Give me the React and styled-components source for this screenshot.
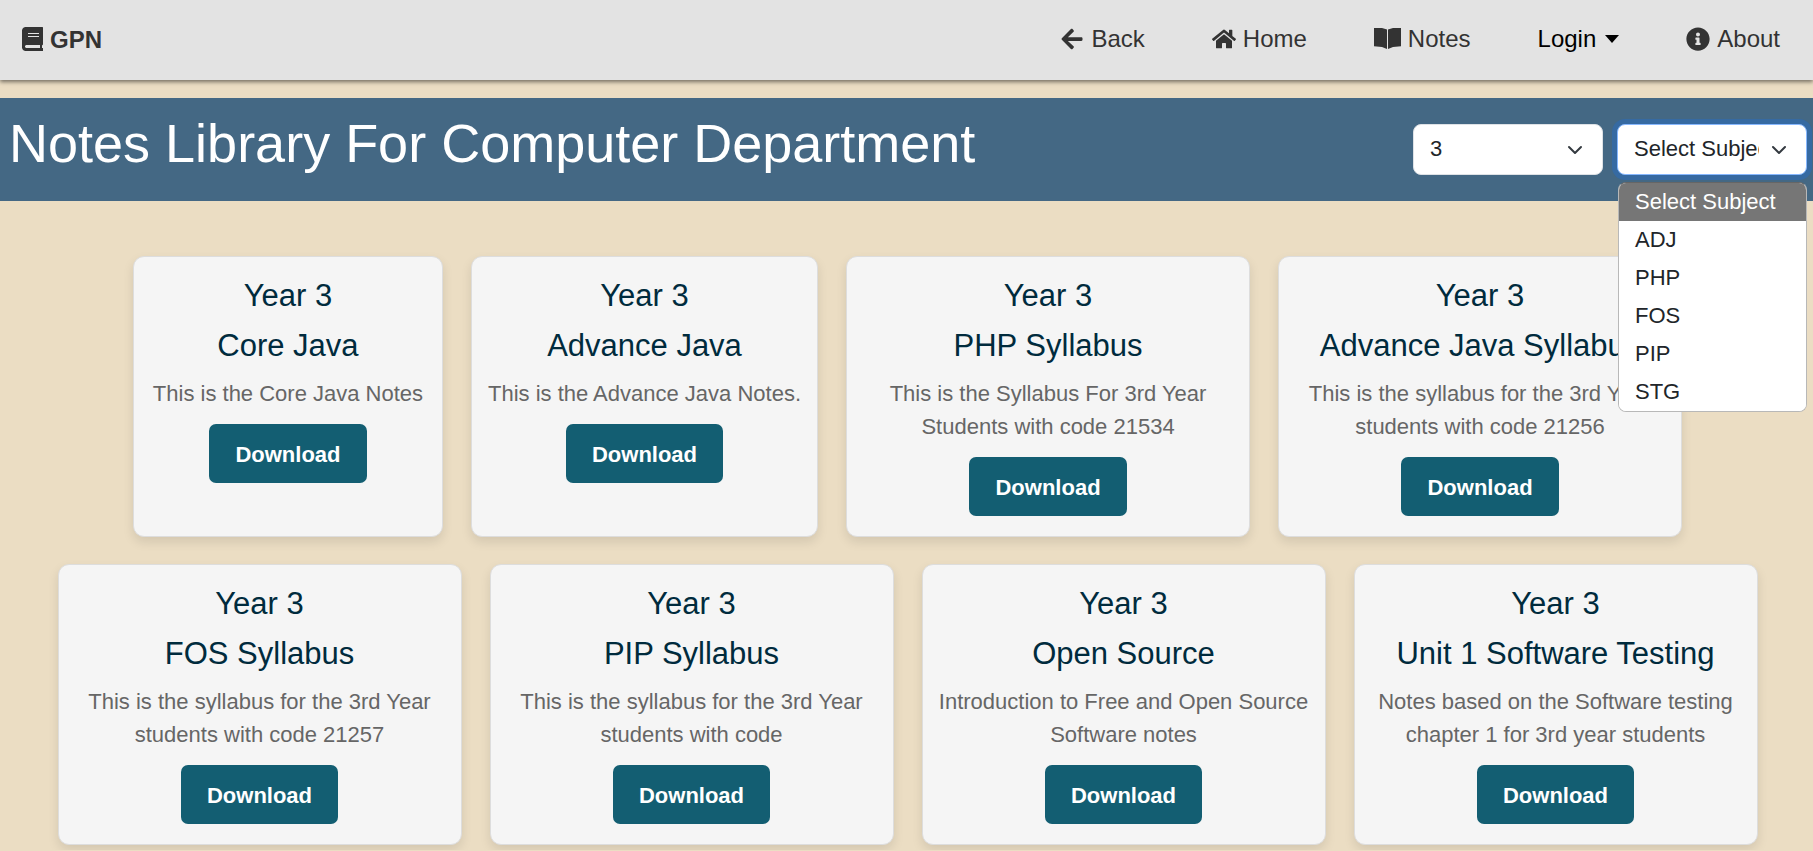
import React, { useState } from "react";
import styled, { createGlobalStyle } from "styled-components";
import { FaArrowLeft, FaHome, FaInfoCircle } from "react-icons/fa";

const GlobalStyle = createGlobalStyle`
  *, *::before, *::after { box-sizing: border-box; }
  body {
    margin: 0;
    background: #ebddc3;
    color: #212529;
    font-family: "Liberation Sans", Arial, sans-serif;
    font-size: 22px;
    line-height: 33px;
  }
`;

const Navbar = styled.header`
  display: flex;
  align-items: center;
  justify-content: space-between;
  height: 80px;
  padding: 0 33px 2px 22px;
  background: #e3e3e3;
  box-shadow: 0 2px 4px rgba(0, 0, 0, 0.5);
  font-size: 24px;
`;

const Brand = styled.a`
  display: flex;
  align-items: center;
  gap: 7px;
  color: #333;
  font-weight: 700;
  text-decoration: none;

  svg {
    width: auto;
    height: 24px;
  }
`;

const NavLinks = styled.nav`
  display: flex;
  align-items: center;
  gap: 67px;
  padding-bottom: 1px;
`;

const NavLink = styled.a`
  display: flex;
  align-items: center;
  gap: 7px;
  color: #333;
  text-decoration: none;

  svg {
    width: auto;
    height: ${(p) => p.$iconHeight || 24}px;
  }
`;

const NavMenuButton = styled.button`
  display: flex;
  align-items: center;
  gap: 9px;
  padding: 0;
  border: 0;
  background: none;
  color: #000;
  font: inherit;

  &::after {
    content: "";
    border: 7px solid transparent;
    border-top: 8px solid #000;
    border-bottom: 0;
  }
`;

const Banner = styled.section`
  display: flex;
  align-items: center;
  justify-content: space-between;
  margin-top: 18px;
  padding: 13px 6px 13px 9px;
  background: #446884;
`;

const Title = styled.h1`
  margin: 0 0 12px;
  color: #fff;
  font-size: 54px;
  font-weight: 400;
  line-height: 65px;
`;

const Filters = styled.div`
  display: flex;
  gap: 14px;
`;

const Field = styled.div`
  position: relative;
  display: grid;
  width: 190px;
`;

const Select = styled.select`
  grid-area: 1 / 1;
  width: 100%;
  height: 51px;
  padding: 0 47px 2px 16px;
  border: 1px solid ${(p) => (p.$open ? "#86b7fe" : "#dee2e6")};
  border-radius: 8px;
  outline: 0;
  box-shadow: ${(p) => (p.$open ? "0 0 0 5px rgba(13, 110, 253, 0.25)" : "none")};
  appearance: none;
  background: #fff;
  color: #212529;
  font: inherit;
  text-overflow: clip;
`;

const Chevron = styled.svg`
  grid-area: 1 / 1;
  place-self: center end;
  width: 16px;
  height: 16px;
  margin-right: 20px;
  pointer-events: none;
`;

const Options = styled.ul`
  position: absolute;
  top: 58px;
  left: 1px;
  right: 0;
  z-index: 2;
  margin: 0;
  padding: 0;
  overflow: hidden;
  border: 1px solid #b8b8b8;
  border-top-color: #666;
  border-radius: 8px;
  background: #fff;
  list-style: none;
`;

const Option = styled.li`
  height: 38px;
  padding: 0 16px;
  background: ${(p) => (p.$active ? "#767676" : "#fff")};
  color: ${(p) => (p.$active ? "#fff" : "#212529")};
  line-height: 38px;
`;

const CardList = styled.main`
  display: flex;
  flex-wrap: wrap;
  justify-content: center;
  gap: 27px 28px;
  padding: 55px 26px 5px 28px;
`;

const Card = styled.article`
  min-width: 310px;
  max-width: 404px;
  padding: 19px 16px 20px;
  border: 1px solid #ddd;
  border-radius: 11px;
  background: #f5f5f5;
  box-shadow: 0 5px 11px rgba(0, 0, 0, 0.1);
  text-align: center;
`;

const CardHeading = styled.h2`
  margin: 0 0 11px;
  color: #002b3d;
  font-size: 31px;
  font-weight: 400;
  line-height: 39px;
`;

const CardText = styled.p`
  margin: 12px 0 14px;
  color: #666;
`;

const Download = styled.button`
  display: inline-block;
  height: 59px;
  padding: 1px 26px 0;
  border: 0;
  border-radius: 7px;
  background: #135e72;
  color: #fff;
  font: inherit;
  font-weight: 700;
  vertical-align: top;
`;

const notes = [
  ["Core Java", "This is the Core Java Notes"],
  ["Advance Java", "This is the Advance Java Notes."],
  ["PHP Syllabus", "This is the Syllabus For 3rd Year Students with code 21534"],
  ["Advance Java Syllabus", "This is the syllabus for the 3rd Year students with code 21256"],
  ["FOS Syllabus", "This is the syllabus for the 3rd Year students with code 21257"],
  ["PIP Syllabus", "This is the syllabus for the 3rd Year students with code"],
  ["Open Source", "Introduction to Free and Open Source Software notes"],
  ["Unit 1 Software Testing", "Notes based on the Software testing chapter 1 for 3rd year students"],
];

const subjects = ["Select Subject", "ADJ", "PHP", "FOS", "PIP", "STG"];

function BookIcon() {
  return (
    <svg viewBox="0 0 21 24" fill="currentColor" aria-hidden="true">
      <path
        fillRule="evenodd"
        d="M3 0H20.5L21 .5V17.5L20 18.5V21H21V24H3L1 23 0 21V3L1 1ZM6 6V7H17V6ZM6 9V10H17V9ZM4 18L3 19V20L4 21H18V18Z"
      />
    </svg>
  );
}

function OpenBookIcon() {
  return (
    <svg viewBox="0 0 27 21" fill="currentColor" aria-hidden="true">
      <path d="M0 0H8L13 1.5V21L8 19 0 18.2ZM27 0H19L14 1.5V21L19 19 27 18.2Z" />
    </svg>
  );
}

function SelectChevron() {
  return (
    <Chevron viewBox="0 0 16 16" aria-hidden="true">
      <path d="m2 5 6 6 6-6" fill="none" stroke="#343a40" strokeWidth="2" strokeLinecap="round" strokeLinejoin="round" />
    </Chevron>
  );
}

export default function App() {
  const [year, setYear] = useState("3");
  const [subject, setSubject] = useState(subjects[0]);

  return (
    <>
      <GlobalStyle />
      <Navbar>
        <Brand href="#"><BookIcon />GPN</Brand>
        <NavLinks>
          <NavLink href="#back"><FaArrowLeft />Back</NavLink>
          <NavLink href="#home"><FaHome />Home</NavLink>
          <NavLink href="#notes" $iconHeight={21}><OpenBookIcon />Notes</NavLink>
          <NavMenuButton type="button">Login</NavMenuButton>
          <NavLink href="#about"><FaInfoCircle />About</NavLink>
        </NavLinks>
      </Navbar>
      <Banner>
        <Title>Notes Library For Computer Department</Title>
        <Filters>
          <Field>
            <Select aria-label="Year" value={year} onChange={(e) => setYear(e.target.value)}>
              {["1", "2", "3"].map((y) => <option key={y}>{y}</option>)}
            </Select>
            <SelectChevron />
          </Field>
          <Field>
            <Select $open aria-label="Subject" value={subject} onChange={(e) => setSubject(e.target.value)}>
              {subjects.map((s) => <option key={s}>{s}</option>)}
            </Select>
            <SelectChevron />
            <Options role="listbox" aria-label="Subject">
              {subjects.map((s) => (
                <Option key={s} role="option" aria-selected={s === subject} $active={s === subject} onClick={() => setSubject(s)}>
                  {s}
                </Option>
              ))}
            </Options>
          </Field>
        </Filters>
      </Banner>
      <CardList>
        {notes.map(([title, text]) => (
          <Card key={title}>
            <CardHeading>Year 3</CardHeading>
            <CardHeading>{title}</CardHeading>
            <CardText>{text}</CardText>
            <Download type="button">Download</Download>
          </Card>
        ))}
      </CardList>
    </>
  );
}
